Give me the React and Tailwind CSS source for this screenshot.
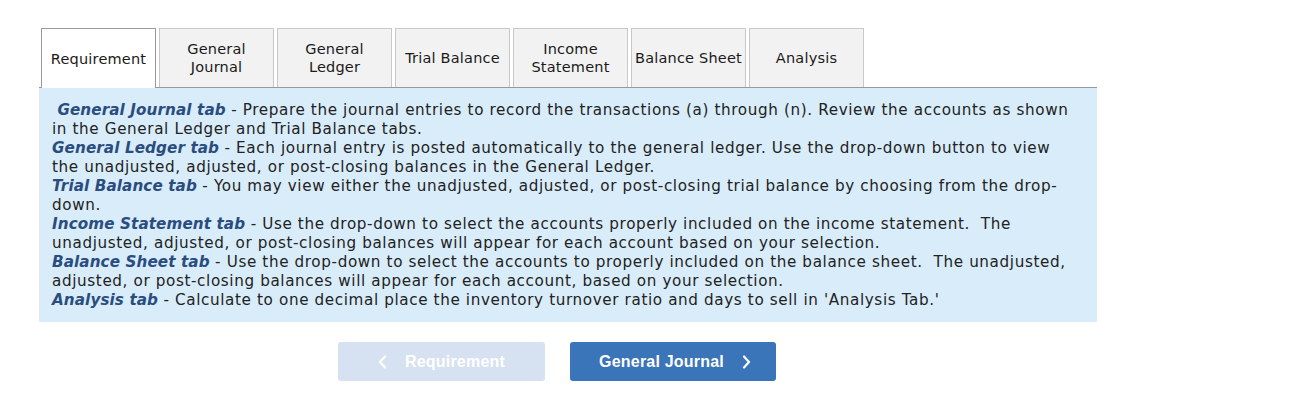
import React from 'react';

const tabs = [
  ['Requirement'],
  ['General', 'Journal'],
  ['General', 'Ledger'],
  ['Trial Balance'],
  ['Income', 'Statement'],
  ['Balance Sheet'],
  ['Analysis'],
];

const items = [
  {
    label: '\u00a0General Journal tab',
    text: ' - Prepare the journal entries to record the transactions (a) through (n). Review the accounts as shown in the General Ledger and Trial Balance tabs.',
  },
  {
    label: 'General Ledger tab',
    text: ' - Each journal entry is posted automatically to the general ledger. Use the drop-down button to view the unadjusted, adjusted, or post-closing balances in the General Ledger.',
  },
  {
    label: 'Trial Balance tab',
    text: ' - You may view either the unadjusted, adjusted, or post-closing trial balance by choosing from the drop-down.',
  },
  {
    label: 'Income Statement tab',
    text: ' - Use the drop-down to select the accounts properly included on the income statement.\u00a0 The unadjusted, adjusted, or post-closing balances will appear for each account based on your selection.',
  },
  {
    label: 'Balance Sheet tab',
    text: ' - Use the drop-down to select the accounts to properly included on the balance sheet.\u00a0 The unadjusted, adjusted, or post-closing balances will appear for each account, based on your selection.',
  },
  {
    label: 'Analysis tab',
    text: " - Calculate to one decimal place the inventory turnover ratio and days to sell in 'Analysis Tab.'",
  },
];

const Chevron = ({ dir }) => (
  <svg width="9" height="14" viewBox="0 0 9 14" fill="none">
    <path
      d={dir === 'left' ? 'M7 1.5 L2 7 L7 12.5' : 'M2 1.5 L7 7 L2 12.5'}
      stroke="currentColor"
      strokeWidth="2.2"
      strokeLinecap="round"
      strokeLinejoin="round"
    />
  </svg>
);

export default function App() {
  return (
    <div className="w-[1290px] h-[414px] bg-white pt-[28px] pl-[39px]" style={{ fontFamily: '"DejaVu Sans", Verdana, sans-serif' }}>
      <div className="w-[1058px]">
        {/* tabs */}
        <div className="flex gap-[3px] pl-[2px] items-start">
          {tabs.map((t, i) => (
            <div
              key={i}
              className={
                i === 0
                  ? 'w-[115px] h-[60px] border border-b-0 border-[#9a9a9a] bg-white flex flex-col items-center justify-center text-[14.5px] leading-[18px] tracking-[0.2px] text-[#1a1a1a] -mb-px relative'
                  : 'w-[115px] h-[59px] border border-b-0 border-[#c8c8c8] bg-[#f2f2f2] flex flex-col items-center justify-center text-[14.5px] leading-[18px] tracking-[0.2px] text-[#1a1a1a]'
              }
            >
              {t.map((l) => (
                <span key={l}>{l}</span>
              ))}
            </div>
          ))}
        </div>
        {/* content */}
        <div className="border-t border-[#9a9a9a] bg-[#d9ecfa] pl-[13px] pr-[16px] pt-[13px] pb-[12px] text-[15.2px] leading-[19px] tracking-[0.62px] text-[#222]">
          {items.map((it, i) => (
            <div key={i}>
              <b className="italic text-[#2a4d7f] tracking-[0.1px]">{it.label}</b>
              {it.text}
            </div>
          ))}
        </div>
        {/* nav buttons */}
        <div className="flex gap-[25px] pl-[299px] pt-[20px]" style={{ fontFamily: '"Liberation Sans", Arial, sans-serif' }}>
          <button className="w-[207px] h-[39px] rounded-[3px] bg-[#d6e2f1] text-white font-bold text-[16px] tracking-[0.2px] flex items-center justify-center gap-[18px]">
            <Chevron dir="left" />
            <span>Requirement</span>
          </button>
          <button className="w-[206px] h-[39px] rounded-[3px] bg-[#3a74b9] text-white font-bold text-[16px] tracking-[0.2px] flex items-center justify-center gap-[18px] pl-[4px]">
            <span>General Journal</span>
            <Chevron dir="right" />
          </button>
        </div>
      </div>
    </div>
  );
}
